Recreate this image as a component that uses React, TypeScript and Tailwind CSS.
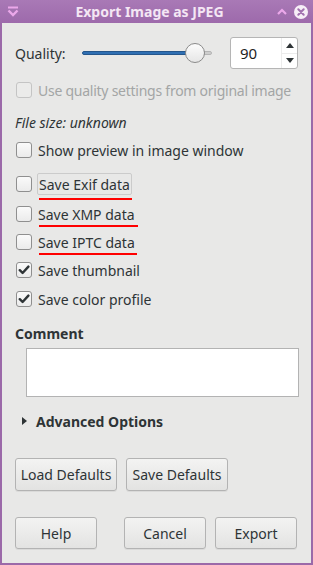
import React from "react";

function Check({ checked = false, disabled = false }: { checked?: boolean; disabled?: boolean }) {
  return (
    <div
      className={
        "w-[16px] h-[16px] rounded-[3px] border flex items-center justify-center shrink-0 " +
        (disabled
          ? "border-[#c4c4c4] bg-[#ebebea]"
          : "border-[#8f8f8f] bg-gradient-to-b from-[#fafafa] to-[#ebebeb]")
      }
    >
      {checked && (
        <svg width="12" height="12" viewBox="0 0 12 12">
          <path d="M1.8 6.2 L4.6 9 L10.4 2.6" fill="none" stroke="#2e3436" strokeWidth="2.4" strokeLinecap="round" strokeLinejoin="round" />
        </svg>
      )}
    </div>
  );
}

function Row({ children, className = "" }: { children: React.ReactNode; className?: string }) {
  return <div className={"h-[20px] flex items-center pl-[1px] whitespace-nowrap " + className}>{children}</div>;
}

function Btn({ children, className = "" }: { children: React.ReactNode; className?: string }) {
  return (
    <div
      className={
        "h-full flex items-center justify-center rounded-[3px] border border-[#b3b3b3] bg-gradient-to-b from-[#f3f3f2] to-[#e3e3e2] shadow-[0_1px_0_rgba(0,0,0,0.06)] whitespace-nowrap " +
        className
      }
    >
      {children}
    </div>
  );
}

export default function App() {
  return (
    <div className="w-[313px] h-[565px] flex flex-col bg-[#e8e8e7] font-['Noto_Sans',sans-serif] text-[14px] text-[#2e3436] overflow-hidden">
      {/* Title bar */}
      <div className="h-[23px] shrink-0 flex items-center bg-gradient-to-b from-[#a979b6] to-[#9d6aab]">
        <div className="w-[30px] h-full flex items-center pl-[7px]">
          <svg width="12" height="12" viewBox="0 0 12 12">
            <rect x="1" y="0.5" width="10" height="2" fill="#eba8ea" />
            <path d="M1.5 4.5 L6 9 L10.5 4.5" fill="none" stroke="#eba8ea" strokeWidth="2.4" />
          </svg>
        </div>
        <div className="flex-1 text-center font-bold text-[14px] text-[#f4e6f4] leading-none">Export Image as JPEG</div>
        <div className="w-[44px] h-full flex items-center pl-[8px] gap-[7px]">
          <svg width="10" height="8" viewBox="0 0 10 8">
            <path d="M1 6 L5 2 L9 6" fill="none" stroke="#eba8ea" strokeWidth="2.2" />
          </svg>
          <svg width="14" height="14" viewBox="0 0 14 14">
            <circle cx="7" cy="7" r="7" fill="#f7eef7" />
            <path d="M4.3 4.3 L9.7 9.7 M9.7 4.3 L4.3 9.7" stroke="#a272b0" strokeWidth="2" strokeLinecap="round" />
          </svg>
        </div>
      </div>

      {/* Body */}
      <div className="flex-1 flex flex-col border-x-2 border-b-2 border-[#9b69a9] pl-[13px] pr-[12px]">
        {/* Quality */}
        <div className="mt-[14px] h-[32px] flex items-center">
          <div className="w-[67px]">Quality:</div>
          <div className="relative w-[130px] h-[20px]">
            <div className="absolute left-0 top-[8px] w-[110px] h-[4px] rounded-full bg-[#2f6fb3] border border-[#24568c]" />
            <div className="absolute left-[110px] top-[8px] w-[20px] h-[4px] rounded-full bg-[#cdcdcd] border border-[#b5b5b5]" />
            <div className="absolute left-[103px] top-0 w-[20px] h-[20px] rounded-full border border-[#8a8a8a] bg-gradient-to-b from-[#fcfcfc] to-[#e6e6e6]" />
          </div>
          <div className="ml-[18px] w-[68px] h-[32px] bg-white border border-[#b5b5b5] rounded-[3px] flex">
            <div className="flex-1 flex items-center pl-[9px] text-[15px] text-[#1e1e1e]">90</div>
            <div className="w-[16px] flex flex-col border-l border-[#ececec]">
              <div className="flex-1 flex items-center justify-center border-b border-[#ececec]">
                <svg width="8" height="5" viewBox="0 0 8 5"><path d="M0 5 L4 0 L8 5 Z" fill="#2e3436" /></svg>
              </div>
              <div className="flex-1 flex items-center justify-center">
                <svg width="8" height="5" viewBox="0 0 8 5"><path d="M0 0 L4 5 L8 0 Z" fill="#2e3436" /></svg>
              </div>
            </div>
          </div>
        </div>

        <Row className="mt-[11px]">
          <Check disabled />
          <span className="ml-[6px] text-[#a3a5a5] tracking-[-0.25px]">Use quality settings from original image</span>
        </Row>

        <div className="mt-[12px] h-[20px] flex items-center italic">File size: unknown</div>

        <Row className="mt-[8px]">
          <Check />
          <span className="ml-[6px]">Show preview in image window</span>
        </Row>

        <Row className="mt-[14px]">
          <Check />
          <span className="relative ml-[5px] px-[1px] h-[22px] flex items-center border border-[#cbcbcb] rounded-[2px]">
            Save Exif data
            <span className="absolute left-[1px] right-[-1px] top-[24px] h-[2px] bg-[#ff0000]" />
          </span>
        </Row>

        <Row className="mt-[10px]">
          <Check />
          <span className="relative ml-[6px]">
            Save XMP data
            <span className="absolute left-[1px] right-[-3px] top-[21px] h-[2px] bg-[#ff0000]" />
          </span>
        </Row>

        <Row className="mt-[8px]">
          <Check />
          <span className="relative ml-[6px]">
            Save IPTC data
            <span className="absolute left-[1px] right-[-2px] top-[21px] h-[2px] bg-[#ff0000]" />
          </span>
        </Row>

        <Row className="mt-[8px]">
          <Check checked />
          <span className="ml-[6px]">Save thumbnail</span>
        </Row>

        <Row className="mt-[9px]">
          <Check checked />
          <span className="ml-[6px]">Save color profile</span>
        </Row>

        <div className="mt-[14px] h-[20px] flex items-center font-bold">Comment</div>

        <div className="mt-[5px] ml-[11px] w-[273px] h-[49px] bg-white border border-[#b3b3b3]" />

        <div className="mt-[14px] h-[20px] flex items-center font-bold">
          <svg width="5" height="8" viewBox="0 0 5 8" className="ml-[7px]"><path d="M0 0 L5 4 L0 8 Z" fill="#2e3436" /></svg>
          <span className="ml-[9px]">Advanced Options</span>
        </div>

        <div className="mt-[27px] h-[33px] flex">
          <Btn className="w-[102px]">Load Defaults</Btn>
          <Btn className="w-[102px] ml-[9px]">Save Defaults</Btn>
        </div>

        <div className="mt-[26px] h-[32px] flex">
          <Btn className="w-[82px]">Help</Btn>
          <Btn className="w-[82px] ml-[27px]">Cancel</Btn>
          <Btn className="w-[82px] ml-[9px]">Export</Btn>
        </div>
      </div>
    </div>
  );
}
